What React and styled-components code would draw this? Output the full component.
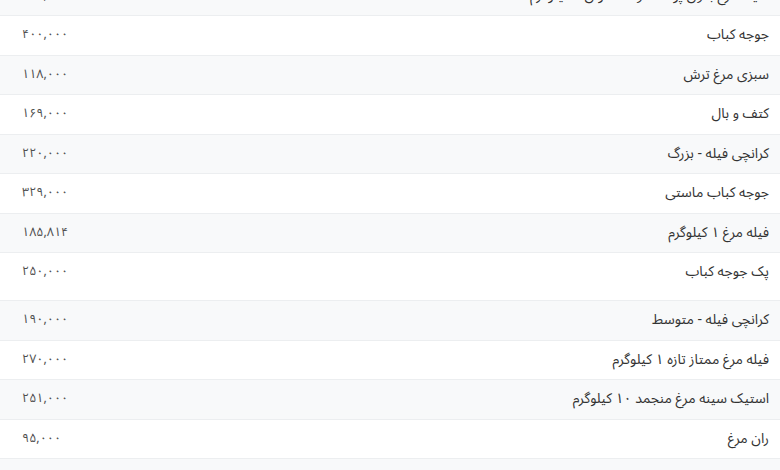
import React from "react";
import styled, { createGlobalStyle } from "styled-components";

const GlobalStyle = createGlobalStyle`
  html, body {
    margin: 0;
    padding: 0;
    background: #ffffff;
    overflow: hidden;
  }
  body {
    font-family: "Noto Sans Arabic", "DejaVu Sans", sans-serif;
  }
`;

//price list, already scrolled a little
const items = [
  { name: "سینه مرغ بدون پوست و استخوان ۱ کیلوگرم", price: "۳۱۵,۰۰۰" },
  { name: "جوجه کباب", price: "۴۰۰,۰۰۰" },
  { name: "سبزی مرغ ترش", price: "۱۱۸,۰۰۰" },
  { name: "کتف و بال", price: "۱۶۹,۰۰۰" },
  { name: "کرانچی فیله - بزرگ", price: "۲۲۰,۰۰۰" },
  { name: "جوجه کباب ماستی", price: "۳۲۹,۰۰۰" },
  { name: "فیله مرغ ۱ کیلوگرم", price: "۱۸۵,۸۱۴" },
  { name: "پک جوجه کباب", price: "۲۵۰,۰۰۰", tall: true },
  { name: "کرانچی فیله - متوسط", price: "۱۹۰,۰۰۰" },
  { name: "فیله مرغ ممتاز تازه ۱ کیلوگرم", price: "۲۷۰,۰۰۰" },
  { name: "استیک سینه مرغ منجمد ۱۰ کیلوگرم", price: "۲۵۱,۰۰۰" },
  { name: "ران مرغ", price: "۹۵,۰۰۰" },
  { name: "بال مرغ", price: "۸۵,۰۰۰" },
];

const App = () => {
  return (
    <React.Fragment>
      <GlobalStyle />
      <Wrapper dir="rtl">
        <Table>
          <tbody>
            {items.map((item, i) => (
              <Row key={i} $tall={item.tall}>
                <NameCell>{item.name}</NameCell>
                <PriceCell>{item.price}</PriceCell>
              </Row>
            ))}
          </tbody>
        </Table>
      </Wrapper>
    </React.Fragment>
  );
};

const Wrapper = styled.div`
  width: 780px;
  height: 470px;
  overflow: hidden;
`;

const Table = styled.table`
  width: 100%;
  border-collapse: collapse;
  margin-top: -24px;
`;

const Row = styled.tr`
  height: ${(p) => (p.$tall ? "48px" : "39.5px")};
  border-bottom: 1px solid #eceef0;
  &:nth-child(odd) {
    background: #f8f9fa;
  }
  td {
    vertical-align: ${(p) => (p.$tall ? "top" : "middle")};
    padding-top: ${(p) => (p.$tall ? "8px" : "0")};
    padding-bottom: 1px;
  }
`;

const NameCell = styled.td`
  text-align: right;
  padding: 0 11px 0 0;
  font-size: 14px;
  line-height: 21px;
  color: #333333;
  white-space: nowrap;
`;

const PriceCell = styled.td`
  text-align: left;
  padding: 0 0 0 22px;
  width: 200px;
  font-size: 12.5px;
  line-height: 21px;
  color: #505050;
  white-space: nowrap;
`;

export default App;
